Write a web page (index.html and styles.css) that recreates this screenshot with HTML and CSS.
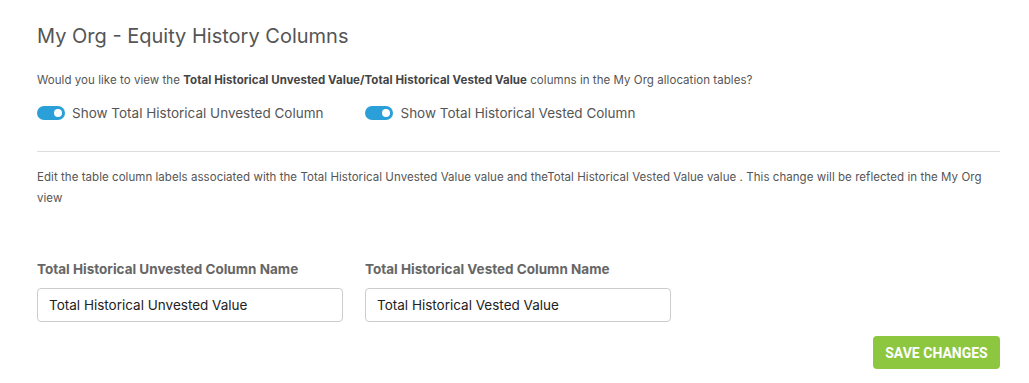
FILE: index.html
```html
<!DOCTYPE html>
<html lang="en">
<head>
  <meta charset="UTF-8" />
  <title>My Org - Equity History Columns</title>
  <link rel="stylesheet" href="styles.css">
</head>
<body>
  <div class="panel">
    <h1 class="title">My Org - Equity History Columns</h1>

    <p class="hint">Would you like to view the <strong>Total Historical Unvested Value/Total Historical Vested Value</strong> columns in the My Org allocation tables?</p>

    <div class="toggles">
      <label class="toggle">
        <span class="switch"><span class="knob"></span></span>
        Show Total Historical Unvested Column
      </label>
      <label class="toggle">
        <span class="switch"><span class="knob"></span></span>
        Show Total Historical Vested Column
      </label>
    </div>

    <hr class="divider" />

    <p class="hint edit">Edit the table column labels associated with the Total Historical Unvested Value value and theTotal Historical Vested Value value . This change will be reflected in the My Org view</p>

    <div class="fields">
      <div class="field">
        <label class="field-label">Total Historical Unvested Column Name</label>
        <input class="field-input" type="text" value="Total Historical Unvested Value" />
      </div>
      <div class="field">
        <label class="field-label">Total Historical Vested Column Name</label>
        <input class="field-input" type="text" value="Total Historical Vested Value" />
      </div>
    </div>

    <div class="actions">
      <button class="save-btn">Save Changes</button>
    </div>
  </div>
</body>
</html>
```

FILE: styles.css
```css
* {
  box-sizing: border-box;
}

body {
  margin: 0;
  background: #ffffff;
  font-family: 'Inter', sans-serif;
  color: #555555;
}

/* contenedor principal */
.panel {
  width: 963px;
  margin-left: 37px;
  padding-top: 22px;
}

.title {
  margin: 0;
  font-size: 20px;
  font-weight: 400;
  line-height: 28px;
  color: #555555;
}

.hint {
  margin: 20px 0 0;
  font-size: 11.5px;
  letter-spacing: 0.05px;
  line-height: 21px;
  color: #555555;
}

.hint strong {
  font-weight: 700;
  color: #444444;
}

/* toggles */
.toggles {
  display: flex;
  gap: 42px;
  margin-top: 12px;
}

.toggle {
  display: flex;
  align-items: center;
  gap: 7px;
  font-size: 13.5px;
  line-height: 20px;
  color: #555555;
}

.switch {
  width: 28px;
  height: 14px;
  border-radius: 7px;
  background: #2a9fd8;
  display: flex;
  align-items: center;
  justify-content: flex-end;
  padding-right: 3px;
}

.knob {
  width: 8px;
  height: 8px;
  border-radius: 50%;
  background: #ffffff;
}

.divider {
  border: none;
  border-top: 1px solid #dddddd;
  margin: 28px 0 0;
}

.hint.edit {
  margin-top: 15px;
}

/* campos */
.fields {
  display: flex;
  gap: 22px;
  margin-top: 51px;
}

.field {
  display: flex;
  flex-direction: column;
  width: 306px;
}

.field-label {
  font-size: 13.5px;
  font-weight: 700;
  line-height: 18px;
  color: #666666;
  margin-bottom: 10px;
}

.field-input {
  height: 34px;
  border: 1px solid #cccccc;
  border-radius: 4px;
  padding: 0 11px;
  font-family: 'Inter', sans-serif;
  font-size: 13.5px;
  color: #222222;
  outline: none;
}

.actions {
  display: flex;
  justify-content: flex-end;
  margin-top: 14px;
}

.save-btn {
  width: 127px;
  height: 33px;
  border: none;
  border-radius: 4px;
  background: #8dc63f;
  color: #ffffff;
  font-family: 'Roboto', sans-serif;
  font-weight: 700;
  font-size: 14px;
  text-transform: uppercase;
  cursor: pointer;
}
```
